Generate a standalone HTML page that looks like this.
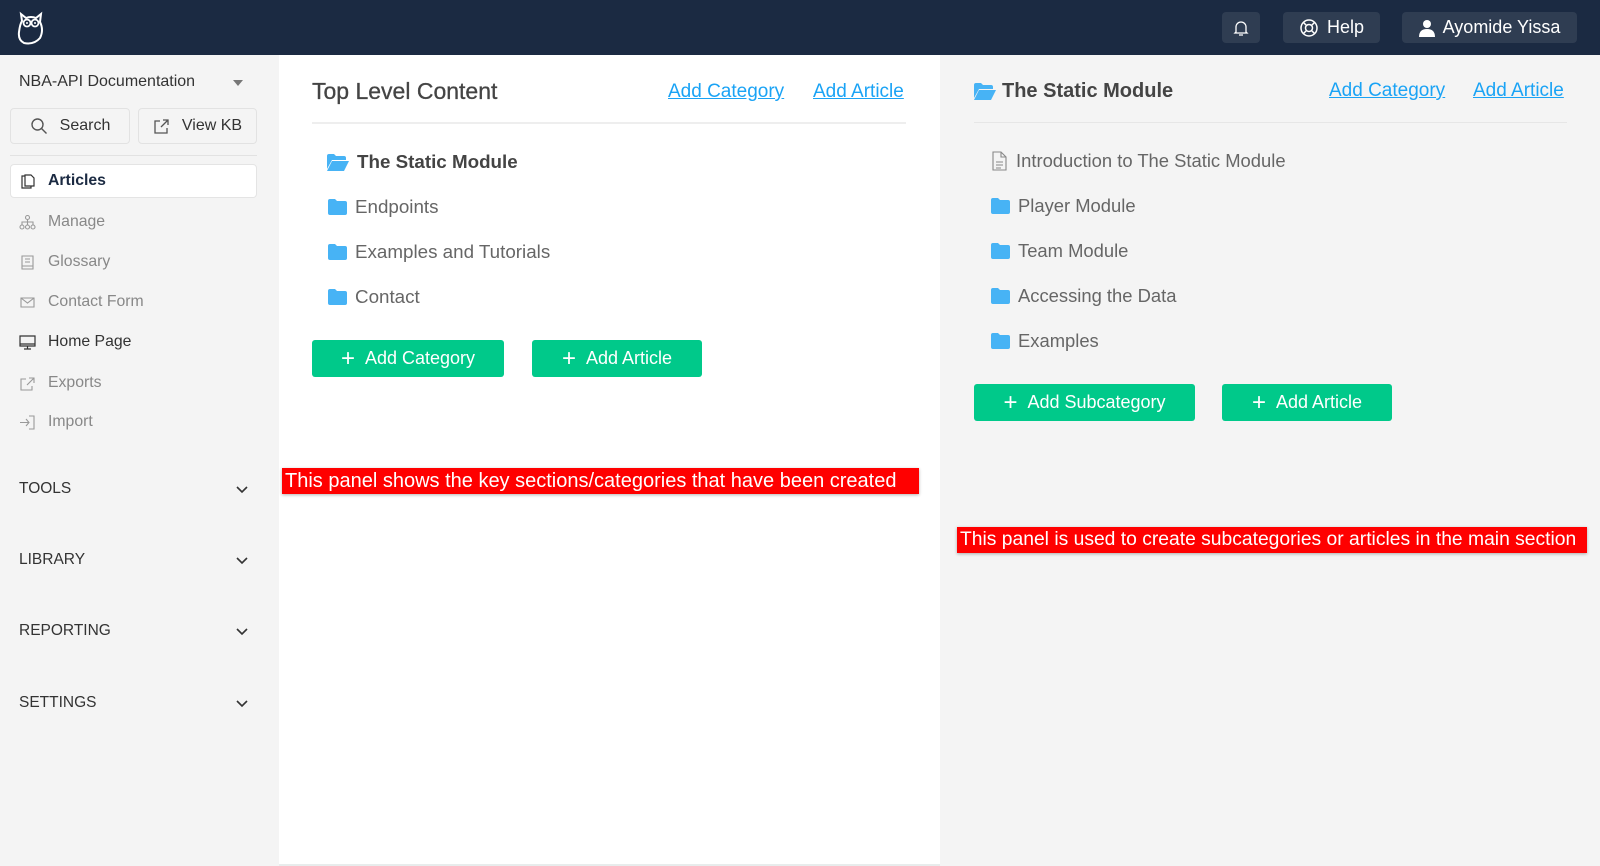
<!DOCTYPE html>
<html><head><meta charset="utf-8"><style>
*{box-sizing:border-box;margin:0;padding:0}
body{width:1600px;height:866px;overflow:hidden;font-family:"Liberation Sans",sans-serif;background:#f4f4f4;position:relative;color:#333}
.abs{position:absolute}
.hdr{left:0;top:0;width:1600px;height:55px;background:#1b2a42}
.hb{background:#2f3d52;border-radius:4px;height:31px;top:12px;color:#fff;font-size:18px;display:flex;align-items:center;justify-content:center;gap:8px}
.side{left:0;top:55px;width:279px;height:811px;background:#f4f4f4}
.sbtn{border:1px solid #e2e2e2;border-radius:4px;height:36px;top:108px;display:flex;align-items:center;justify-content:center;gap:12px;font-size:16px;color:#333}
.mi{left:19px;font-size:15.8px;color:#888;display:flex;align-items:center;gap:12px;height:20px}
.mi svg{width:17px;height:17px}
.sec{left:19px;width:230px;font-size:15.5px;color:#333;display:flex;justify-content:space-between;align-items:center}
.main{left:279px;top:55px;width:661px;height:811px;background:#fff;border-bottom:2px solid #e8ecec}
.title{font-size:23px;color:#444}
.lnk{font-size:19px;color:#1aa3f5;text-decoration:underline}
.it{font-size:18.8px;color:#666;display:flex;align-items:center;gap:8px}
.gb{background:#00c98a;color:#fff;font-size:18px;border-radius:3px;height:37px;display:flex;align-items:center;justify-content:center;gap:10px}
.red{background:#ff0000;color:#fff;font-size:20px;height:26px;line-height:26px;padding-left:3px;box-shadow:0 1px 3px rgba(0,0,0,.3);white-space:nowrap}
</style></head><body>
<div class="abs hdr"></div>
<svg class="abs" style="left:16px;top:10px" width="30" height="36" viewBox="0 0 30 36"><path d="M5 4 L10 8 Q15 6 20 8 L25 4 L24 12 Q28 20 24 28 Q18 35 8 33 Q2 30 3 22 Q4 14 6 11 Z" fill="none" stroke="#fff" stroke-width="2"/><circle cx="11" cy="13" r="3.5" fill="none" stroke="#fff" stroke-width="1.8"/><circle cx="19" cy="13" r="3.5" fill="none" stroke="#fff" stroke-width="1.8"/><circle cx="11" cy="13" r="1" fill="#fff"/><circle cx="19" cy="13" r="1" fill="#fff"/></svg>
<div class="abs hb" style="left:1222px;width:38px"><svg width="16" height="18" viewBox="0 0 16 18"><path d="M3 13 V8 a5 5 0 0 1 10 0 V13 L14 14 H2 Z M6 16 h4" fill="none" stroke="#fff" stroke-width="1.3"/></svg></div>
<div class="abs hb" style="left:1283px;width:97px"><svg width="20" height="20" viewBox="0 0 20 20"><circle cx="10" cy="10" r="8" fill="none" stroke="#fff" stroke-width="1.5"/><circle cx="10" cy="10" r="3.5" fill="none" stroke="#fff" stroke-width="1.5"/><path d="M4.5 4.5l3 3M15.5 4.5l-3 3M4.5 15.5l3-3M15.5 15.5l-3-3" stroke="#fff" stroke-width="1.5"/></svg>Help</div>
<div class="abs hb" style="left:1402px;width:175px"><svg width="16" height="18" viewBox="0 0 16 18"><circle cx="8" cy="5" r="4" fill="#fff"/><path d="M0 18 Q0 10 8 10 Q16 10 16 18Z" fill="#fff"/></svg>Ayomide Yissa</div>

<div class="abs side"></div>
<div class="abs" style="left:19px;top:73px;font-size:16px;color:#333">NBA-API Documentation</div>
<div class="abs" style="left:233px;top:80px;width:0;height:0;border-left:5px solid transparent;border-right:5px solid transparent;border-top:6px solid #777"></div>
<div class="abs sbtn" style="left:10px;width:120px"><svg width="18" height="18" viewBox="0 0 18 18"><circle cx="7.5" cy="7.5" r="5.5" fill="none" stroke="#555" stroke-width="1.4"/><path d="M11.5 11.5l5 5" stroke="#555" stroke-width="1.4"/></svg>Search</div>
<div class="abs sbtn" style="left:138px;width:119px"><svg width="17" height="17" viewBox="0 0 17 17"><path d="M7 3H2v12h12v-5M10 2h5v5M15 2L8 9" fill="none" stroke="#555" stroke-width="1.3"/></svg>View KB</div>
<div class="abs" style="left:10px;top:155px;width:247px;height:1px;background:#e2e2e2"></div>
<div class="abs" style="left:10px;top:164px;width:247px;height:34px;background:#fff;border:1px solid #e4e4e4;border-radius:4px"></div>
<div class="abs mi" style="top:171px;color:#1b2a42;font-weight:bold"><svg viewBox="0 0 17 17"><path d="M6 3H3v12h9v-2M6 2h6l3 3v8H6Z" fill="none" stroke="#333" stroke-width="1.2"/></svg>Articles</div>
<div class="abs mi" style="top:212px"><svg viewBox="0 0 17 17" fill="none" stroke="#999" stroke-width="1.1"><circle cx="8.5" cy="3.5" r="2"/><circle cx="3" cy="13" r="2"/><circle cx="8.5" cy="13" r="2"/><circle cx="14" cy="13" r="2"/><path d="M8.5 5.5V11M3 11V8h11v3"/></svg>Manage</div>
<div class="abs mi" style="top:252px"><svg viewBox="0 0 17 17" fill="none" stroke="#999" stroke-width="1.1"><path d="M3 2h11v13H3ZM6 5h5M6 8h5M3 12h11"/></svg>Glossary</div>
<div class="abs mi" style="top:292px"><svg viewBox="0 0 17 17" fill="none" stroke="#999" stroke-width="1.1"><path d="M2 4h13v9H2ZM2 4l6.5 5L15 4"/></svg>Contact Form</div>
<div class="abs mi" style="top:332px;color:#333"><svg viewBox="0 0 17 17" fill="none" stroke="#333" stroke-width="1.2"><path d="M1 2h15v10H1ZM1 10h15M8.5 12v3M5 15h7"/></svg>Home Page</div>
<div class="abs mi" style="top:373px"><svg viewBox="0 0 17 17" fill="none" stroke="#999" stroke-width="1.1"><path d="M7 4H2v11h11v-4M10 3h5v5M15 3l-7 7"/></svg>Exports</div>
<div class="abs mi" style="top:412px"><svg viewBox="0 0 17 17" fill="none" stroke="#999" stroke-width="1.1"><path d="M10 2h5v13h-5M1 8.5h9M7 5l3 3.5-3 3.5"/></svg>Import</div>
<div class="abs sec" style="top:480px">TOOLS<svg width="14" height="9" viewBox="0 0 14 9"><path d="M2 2l5 5 5-5" fill="none" stroke="#333" stroke-width="1.6"/></svg></div>
<div class="abs sec" style="top:551px">LIBRARY<svg width="14" height="9" viewBox="0 0 14 9"><path d="M2 2l5 5 5-5" fill="none" stroke="#333" stroke-width="1.6"/></svg></div>
<div class="abs sec" style="top:622px">REPORTING<svg width="14" height="9" viewBox="0 0 14 9"><path d="M2 2l5 5 5-5" fill="none" stroke="#333" stroke-width="1.6"/></svg></div>
<div class="abs sec" style="top:694px">SETTINGS<svg width="14" height="9" viewBox="0 0 14 9"><path d="M2 2l5 5 5-5" fill="none" stroke="#333" stroke-width="1.6"/></svg></div>

<div class="abs main"></div>
<div class="abs title" style="left:312px;top:78px;-webkit-text-stroke:0.3px #444">Top Level Content</div>
<div class="abs lnk" style="left:668px;top:81px">Add Category</div>
<div class="abs lnk" style="left:813px;top:81px">Add Article</div>
<div class="abs" style="left:312px;top:122px;width:594px;height:2px;background:#eee"></div>
<div class="abs it" style="left:327px;top:151px;font-weight:bold;color:#444"><svg width="22" height="17" viewBox="0 0 22 17"><path d="M0 2q0-2 2-2h5l2 2h8q2 0 2 2v2H5L0 15Z" fill="#47b3f5"/><path d="M5 7h17l-5 10H0Z" fill="#47b3f5"/></svg>The Static Module</div>
<div class="abs it" style="left:328px;top:196px"><svg width="19" height="16" viewBox="0 0 19 16"><path d="M0 2q0-2 2-2h5l2 2h8q2 0 2 2v10q0 2-2 2H2q-2 0-2-2Z" fill="#47b3f5"/></svg>Endpoints</div>
<div class="abs it" style="left:328px;top:241px"><svg width="19" height="16" viewBox="0 0 19 16"><path d="M0 2q0-2 2-2h5l2 2h8q2 0 2 2v10q0 2-2 2H2q-2 0-2-2Z" fill="#47b3f5"/></svg>Examples and Tutorials</div>
<div class="abs it" style="left:328px;top:286px"><svg width="19" height="16" viewBox="0 0 19 16"><path d="M0 2q0-2 2-2h5l2 2h8q2 0 2 2v10q0 2-2 2H2q-2 0-2-2Z" fill="#47b3f5"/></svg>Contact</div>
<div class="abs gb" style="left:312px;top:340px;width:192px"><span style="font-size:24px;font-weight:300">+</span>Add Category</div>
<div class="abs gb" style="left:532px;top:340px;width:170px"><span style="font-size:24px;font-weight:300">+</span>Add Article</div>
<div class="abs red" style="left:282px;top:468px;width:637px">This panel shows the key sections/categories that have been created</div>

<div class="abs" style="left:974px;top:83px"><svg width="22" height="17" viewBox="0 0 22 17"><path d="M0 2q0-2 2-2h5l2 2h8q2 0 2 2v2H5L0 15Z" fill="#47b3f5"/><path d="M5 7h17l-5 10H0Z" fill="#47b3f5"/></svg></div>
<div class="abs title" style="left:1002px;top:80px;font-size:20px;font-weight:bold">The Static Module</div>
<div class="abs lnk" style="left:1329px;top:80px">Add Category</div>
<div class="abs lnk" style="left:1473px;top:80px">Add Article</div>
<div class="abs" style="left:974px;top:122px;width:593px;height:1px;background:#e6e6e6"></div>
<div class="abs it" style="left:991px;top:150px;font-size:18.4px"><svg width="17" height="20" viewBox="0 0 17 20" fill="none" stroke="#888" stroke-width="1.1"><path d="M2 1h8l5 5v13H2ZM10 1v5h5M5 11h7M5 14h7M5 17h5"/></svg>Introduction to The Static Module</div>
<div class="abs it" style="left:991px;top:195px;font-size:18.4px"><svg width="19" height="16" viewBox="0 0 19 16"><path d="M0 2q0-2 2-2h5l2 2h8q2 0 2 2v10q0 2-2 2H2q-2 0-2-2Z" fill="#47b3f5"/></svg>Player Module</div>
<div class="abs it" style="left:991px;top:240px;font-size:18.4px"><svg width="19" height="16" viewBox="0 0 19 16"><path d="M0 2q0-2 2-2h5l2 2h8q2 0 2 2v10q0 2-2 2H2q-2 0-2-2Z" fill="#47b3f5"/></svg>Team Module</div>
<div class="abs it" style="left:991px;top:285px;font-size:18.4px"><svg width="19" height="16" viewBox="0 0 19 16"><path d="M0 2q0-2 2-2h5l2 2h8q2 0 2 2v10q0 2-2 2H2q-2 0-2-2Z" fill="#47b3f5"/></svg>Accessing the Data</div>
<div class="abs it" style="left:991px;top:330px;font-size:18.4px"><svg width="19" height="16" viewBox="0 0 19 16"><path d="M0 2q0-2 2-2h5l2 2h8q2 0 2 2v10q0 2-2 2H2q-2 0-2-2Z" fill="#47b3f5"/></svg>Examples</div>
<div class="abs gb" style="left:974px;top:384px;width:221px"><span style="font-size:24px;font-weight:300">+</span>Add Subcategory</div>
<div class="abs gb" style="left:1222px;top:384px;width:170px"><span style="font-size:24px;font-weight:300">+</span>Add Article</div>
<div class="abs red" style="left:957px;top:527px;width:630px;font-size:19.3px">This panel is used to create subcategories or articles in the main section</div>
</body></html>
